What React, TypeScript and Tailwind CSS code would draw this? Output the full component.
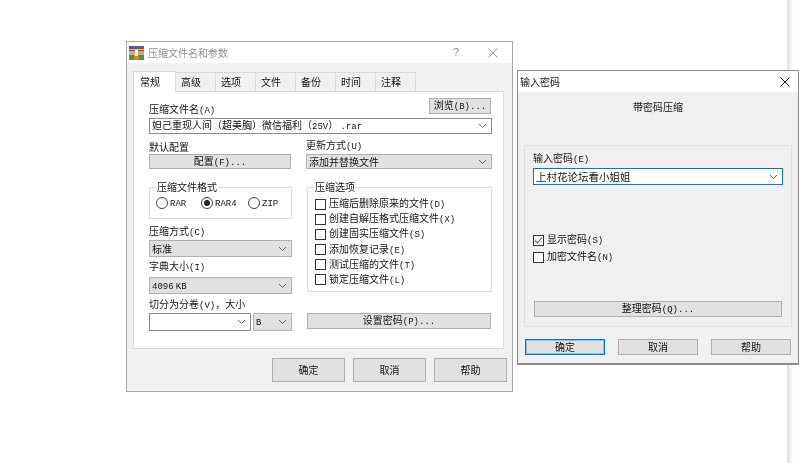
import React from "react";

function T({ children, className = "" }: { children: string; className?: string }) {
  const parts = children.split(/([\x21-\x7e]+)/);
  return (
    <span className={"whitespace-pre text-[10px] leading-[14px] " + className}>
      {parts.map((p, i) =>
        /^[\x21-\x7e]+$/.test(p) ? (
          <span key={i} className="font-['Liberation_Mono',monospace] text-[9px]">{p}</span>
        ) : (
          <span key={i}>{p}</span>
        )
      )}
    </span>
  );
}

function Chevron() {
  return (
    <svg width="9" height="6" viewBox="0 0 9 6" className="shrink-0">
      <polyline points="1,1 4.5,4.5 8,1" fill="none" stroke="#6a6a6a" strokeWidth="1" />
    </svg>
  );
}

function Btn({ text, className = "" }: { text: string; className?: string }) {
  return (
    <div className={"flex items-center justify-center border border-[#b0b0b0] bg-[#e1e1e1] " + className}>
      <T>{text}</T>
    </div>
  );
}

function Combo({ text, white, className = "" }: { text?: string; white?: boolean; className?: string }) {
  return (
    <div
      className={
        "flex items-center justify-between pl-[2px] pr-[4px] border " +
        (white ? "bg-white border-[#8f8f8f] " : "bg-[#e1e1e1] border-[#b0b0b0] ") +
        className
      }
    >
      <T>{text ?? ""}</T>
      <Chevron />
    </div>
  );
}

function Label({ text, className = "" }: { text: string; className?: string }) {
  return (
    <div className={"flex items-end " + className}>
      <T>{text}</T>
    </div>
  );
}

function Radio({ text, on, className = "" }: { text: string; on?: boolean; className?: string }) {
  return (
    <div className={"flex items-center gap-[2px] " + className}>
      <div className="flex h-[12px] w-[12px] items-center justify-center rounded-full border border-[#444] bg-white">
        {on && <div className="h-[6px] w-[6px] rounded-full bg-[#222]" />}
      </div>
      <T>{text}</T>
    </div>
  );
}

function Check({ text, checked, className = "" }: { text: string; checked?: boolean; className?: string }) {
  return (
    <div className={"flex items-center gap-[3px] " + className}>
      <div className={"flex h-[11px] w-[11px] items-center justify-center border border-[#333] " + (checked ? "bg-[#f0f0f0]" : "bg-white")}>
        {checked && (
          <svg width="9" height="9" viewBox="0 0 9 9">
            <polyline points="1,4.5 3.5,7 8,1.5" fill="none" stroke="#666" strokeWidth="1.1" />
          </svg>
        )}
      </div>
      <T>{text}</T>
    </div>
  );
}

function Group({ title, className = "", children }: { title: string; className?: string; children: React.ReactNode }) {
  return (
    <div className={"relative border border-[#dcdcdc] " + className}>
      <div className="absolute left-[6px] top-[-8px] flex bg-white px-px">
        <T>{title}</T>
      </div>
      {children}
    </div>
  );
}

function Tab({ text, active }: { text: string; active?: boolean }) {
  return active ? (
    <div className="z-10 -mb-px flex h-[21px] w-[43px] items-center border border-b-0 border-[#d9d9d9] bg-white pl-[6px]">
      <T>{text}</T>
    </div>
  ) : (
    <div className="-ml-px flex h-[19px] w-[41px] items-center border border-b-0 border-[#d9d9d9] bg-[#f0f0f0] pl-[5px]">
      <T>{text}</T>
    </div>
  );
}

function RarIcon() {
  return (
    <svg width="15" height="14" viewBox="0 0 15 14" className="shrink-0">
      <rect x="0" y="0" width="5" height="14" fill="#7b3f98" />
      <rect x="5" y="0" width="5" height="14" fill="#3c66b5" />
      <rect x="10" y="0" width="5" height="14" fill="#b23a5c" />
      <rect x="0" y="9" width="5" height="5" fill="#3f9a4a" />
      <rect x="5" y="9" width="5" height="5" fill="#d08a2e" />
      <rect x="10" y="9" width="5" height="5" fill="#3f9a4a" />
      <rect x="0" y="5" width="15" height="4" fill="#d9a47a" />
      <rect x="6" y="4" width="3" height="6" fill="#f2efe6" />
      <rect x="0" y="3" width="15" height="1" fill="#e8c23a" />
    </svg>
  );
}

function CloseX({ color }: { color: string }) {
  return (
    <svg width="10" height="10" viewBox="0 0 10 10" className="shrink-0">
      <path d="M0.5 0.5L9.5 9.5M9.5 0.5L0.5 9.5" stroke={color} strokeWidth="1" fill="none" />
    </svg>
  );
}

export default function App() {
  return (
    <div className="relative h-[463px] w-[799px] overflow-hidden bg-white font-['Noto_Sans_CJK_SC',sans-serif] text-[#141414]">
      {/* strip of the window behind */}
      <div className="absolute left-[787px] top-0 h-[463px] w-[6px] bg-gradient-to-r from-[#dedede] to-white" />

      {/* main dialog */}
      <div className="absolute left-[126px] top-[41px] flex h-[351px] w-[387px] flex-col border border-[#a8a8a8] bg-[#f0f0f0] blur-[0.35px]">
        <div className="flex h-[21px] items-center bg-white pl-[2px] pr-[14px]">
          <RarIcon />
          <T className="ml-[4px] text-[#8f8f8f]">压缩文件名和参数</T>
          <div className="ml-auto flex items-center gap-[29px]">
            <span className="font-['Liberation_Sans',sans-serif] text-[11px] text-[#8f8f8f]">?</span>
            <CloseX color="#9a9a9a" />
          </div>
        </div>
        <div className="ml-[6px] mt-[8px] flex items-end">
          <Tab text="常规" active />
          <Tab text="高级" />
          <Tab text="选项" />
          <Tab text="文件" />
          <Tab text="备份" />
          <Tab text="时间" />
          <Tab text="注释" />
        </div>
        <div className="ml-[6px] h-[258px] w-[371px] border border-[#d9d9d9] bg-white pl-[15px] pr-[11px] pt-[6px]">
          <div className="flex h-[20px] items-start justify-between pr-px">
            <T className="self-end">压缩文件名(A)</T>
            <Btn text="浏览(B)..." className="h-[16px] w-[62px]" />
          </div>
          <Combo text="妲己重现人间（超美胸）微信福利（25V） .rar" white className="h-[16px]" />
          <div className="grid grid-cols-[143px_186px] gap-x-[14px]">
            <div className="flex flex-col">
              <Label text="默认配置" className="h-[20px]" />
              <Btn text="配置(F)..." className="h-[15px] w-[142px]" />
              <Group title="压缩文件格式" className="mt-[18px] h-[32px]">
                <div className="flex h-full items-center pl-[6px]">
                  <Radio text="RAR" className="w-[45px]" />
                  <Radio text="RAR4" on className="w-[47px]" />
                  <Radio text="ZIP" />
                </div>
              </Group>
              <Label text="压缩方式(C)" className="h-[21px]" />
              <Combo text="标准" className="h-[17px]" />
              <Label text="字典大小(I)" className="h-[20px] pb-[2px]" />
              <Combo text="4096 KB" className="h-[17px]" />
              <Label text="切分为分卷(V)，大小" className="h-[19px]" />
              <div className="flex gap-[2px]">
                <Combo white className="h-[18px] w-[102px]" />
                <Combo text="B" className="h-[18px] w-[39px]" />
              </div>
            </div>
            <div className="flex flex-col">
              <Label text="更新方式(U)" className="h-[20px]" />
              <Combo text="添加并替换文件" className="h-[15px]" />
              <Group title="压缩选项" className="ml-px mt-[18px] h-[105px]">
                <div className="flex flex-col gap-[1.2px] pl-[7px] pt-[9px]">
                  <Check text="压缩后删除原来的文件(D)" className="h-[14px]" />
                  <Check text="创建自解压格式压缩文件(X)" className="h-[14px]" />
                  <Check text="创建固实压缩文件(S)" className="h-[14px]" />
                  <Check text="添加恢复记录(E)" className="h-[14px]" />
                  <Check text="测试压缩的文件(T)" className="h-[14px]" />
                  <Check text="锁定压缩文件(L)" className="h-[14px]" />
                </div>
              </Group>
              <Btn text="设置密码(P)..." className="ml-px mt-[21px] h-[16px] w-[184px]" />
            </div>
          </div>
        </div>
        <div className="ml-[145px] mt-[9px] flex gap-[8px]">
          <Btn text="确定" className="h-[24px] w-[73px]" />
          <Btn text="取消" className="h-[24px] w-[73px]" />
          <Btn text="帮助" className="h-[24px] w-[73px]" />
        </div>
      </div>

      {/* password dialog */}
      <div className="absolute left-[517px] top-[70px] flex h-[295px] w-[282px] flex-col border border-b-2 border-[#8a8a8a] bg-[#f0f0f0] blur-[0.35px]">
        <div className="flex h-[21px] items-center justify-between bg-white pl-[2px] pr-[8px]">
          <T>输入密码</T>
          <CloseX color="#222" />
        </div>
        <div className="flex h-[30px] items-center justify-center">
          <T>带密码压缩</T>
        </div>
        <div className="ml-[6px] mt-[23px] h-[182px] w-[268px] border border-[#e0e0e0] px-[8px]">
          <Label text="输入密码(E)" className="h-[22px] pb-px" />
          <div className="flex h-[17px] items-center justify-between border border-[#0078d7] bg-white pl-[2px] pr-[4px]">
            <span className="text-[10.5px] leading-[14px]">上村花论坛看小姐姐</span>
            <Chevron />
          </div>
          <Check text="显示密码(S)" checked className="mt-[47px] h-[16px]" />
          <Check text="加密文件名(N)" className="mt-px h-[16px]" />
          <Btn text="整理密码(Q)..." className="ml-px mt-[36px] h-[16px] w-[248px]" />
        </div>
        <div className="ml-[7px] mt-[12px] flex gap-[13px]">
          <Btn text="确定" className="h-[16px] w-[80px] !border-[#0078d7] shadow-[inset_0_0_0_1px_#8fbde6]" />
          <Btn text="取消" className="h-[16px] w-[80px]" />
          <Btn text="帮助" className="h-[16px] w-[80px]" />
        </div>
      </div>
    </div>
  );
}
